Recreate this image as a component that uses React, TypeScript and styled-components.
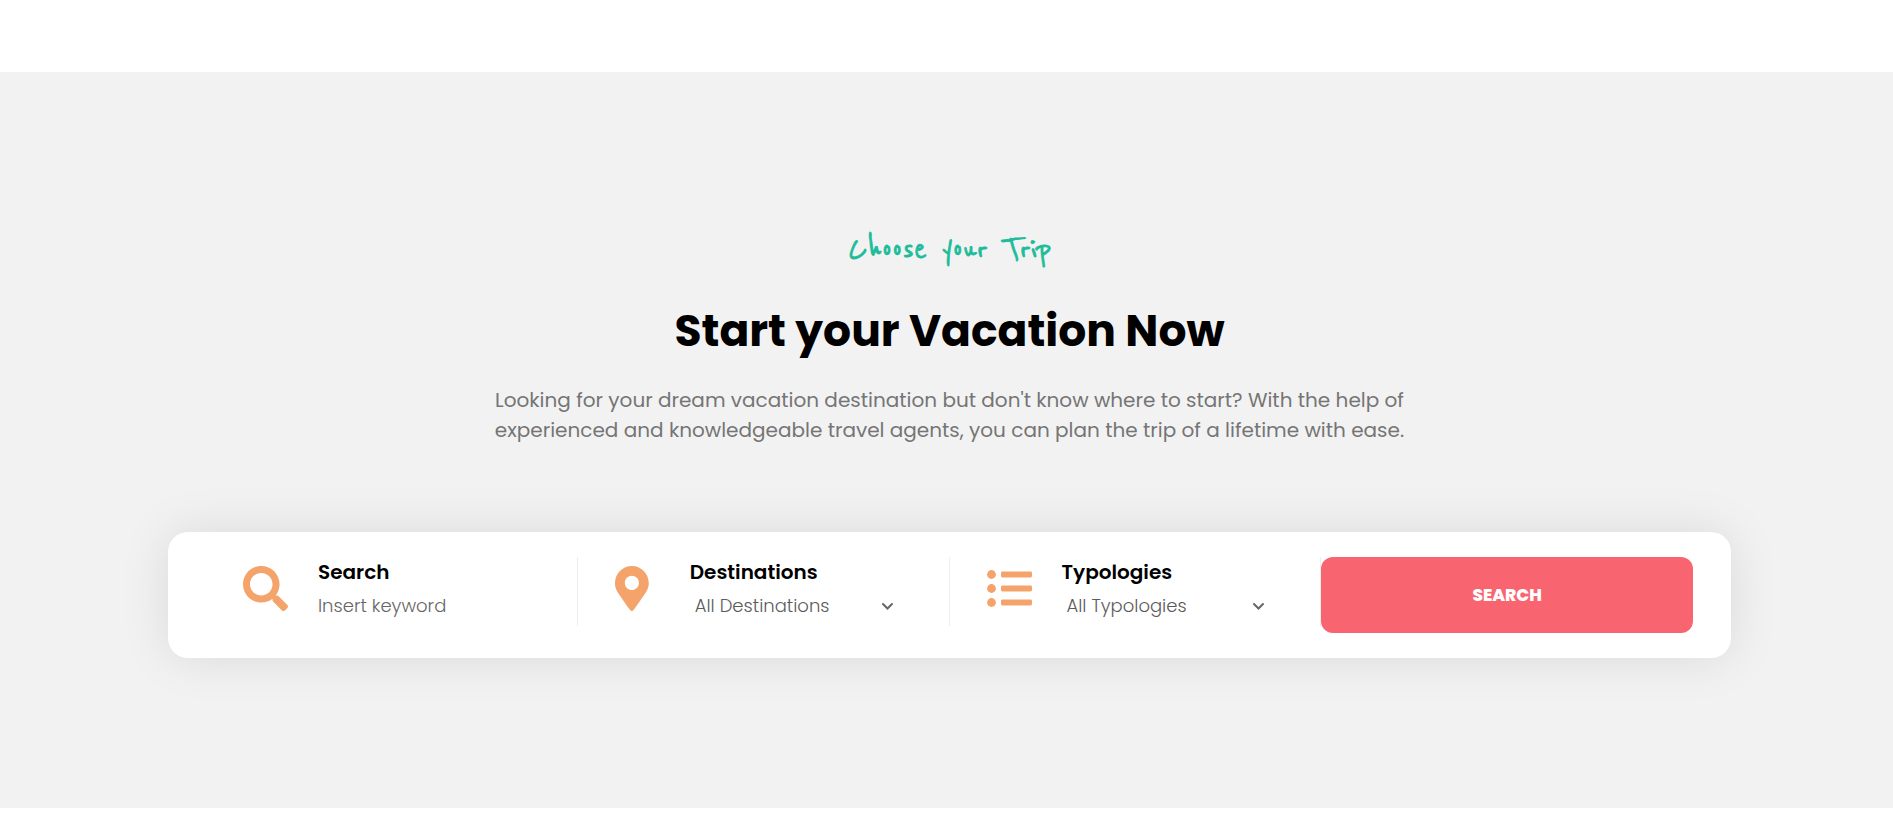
import React from "react";
import styled, { createGlobalStyle } from "styled-components";
import { FaSearch } from "react-icons/fa";

const GlobalStyle = createGlobalStyle`
  *, *::before, *::after {
    box-sizing: border-box;
  }
  body {
    margin: 0;
    background: #ffffff;
    color: #000000;
    font-family: "Poppins", "Inter", sans-serif;
    font-size: 16px;
  }
`;

const Page = styled.main`
  padding: 72px 0 24px;
`;

const Section = styled.section`
  padding: 152px 162px 150px 168px;
  background: #f2f2f2;
`;

const Intro = styled.header`
  display: flex;
  flex-direction: column;
  align-items: center;
  text-align: center;
`;

const Tagline = styled.p`
  margin: 0;
  color: #1fbc9b;
  font-family: "Reenie Beanie", "Covered By Your Grace", "Lato", cursive;
  font-size: 37px;
  font-weight: 700;
  line-height: 52px;
  -webkit-text-stroke: 1px currentColor;
`;

const Title = styled.h2`
  margin: 25px 0 0;
  font-size: 44px;
  font-weight: 700;
  line-height: 60px;
`;

const Lead = styled.p`
  max-width: 940px;
  margin: 24px 0 0;
  color: #757575;
  font-size: 20px;
  line-height: 30px;
`;

const SearchForm = styled.form`
  display: grid;
  grid-template-columns: repeat(4, 1fr);
  align-items: start;
  margin-top: 87px;
  padding: 25px 38px;
  border-radius: 20px;
  background: #ffffff;
  box-shadow: 0 0 50px rgba(0, 0, 0, 0.1);
`;

const Field = styled.div`
  display: flex;
  gap: 30px;
  height: 69px;
  padding: 0 52px 0 37px;
  border-right: 1px solid #eeeeee;
`;

const FieldIcon = styled.span`
  display: flex;
  flex: 0 0 45px;
  padding-top: 9px;
  color: #f4a46b;

  svg {
    flex: none;
    height: 45px;
    width: auto;
  }
`;

const FieldBody = styled.div`
  display: flex;
  flex: 1;
  flex-direction: column;
  min-width: 0;
`;

const FieldLabel = styled.label`
  font-size: 20px;
  font-weight: 600;
  line-height: 30px;
`;

const TextInput = styled.input`
  width: 100%;
  height: 36px;
  padding: 0;
  border: 0;
  outline: 0;
  background: transparent;
  color: #666666;
  font: inherit;
  font-size: 18px;
  font-weight: 300;

  &::placeholder {
    color: #666666;
    opacity: 1;
  }
`;

const SelectWrap = styled.div`
  position: relative;
  display: flex;
  align-items: center;
`;

const Select = styled.select`
  width: 100%;
  height: 36px;
  padding: 0 24px 0 5px;
  border: 0;
  outline: 0;
  appearance: none;
  background: transparent;
  color: #5c5c5c;
  font: inherit;
  font-size: 18px;
  font-weight: 300;
`;

const Chevron = styled.svg`
  position: absolute;
  right: 3px;
  width: 13px;
  height: 9px;
  pointer-events: none;
`;

const SubmitButton = styled.button`
  height: 76px;
  padding: 0;
  border: 0;
  border-radius: 12px;
  background: #f86570;
  color: #ffffff;
  font: inherit;
  font-size: 17px;
  font-weight: 800;
  cursor: pointer;
`;

const PinIcon = () => (
  <svg viewBox="0 0 384 512" fill="currentColor" aria-hidden="true">
    <path
      fillRule="evenodd"
      d="M172.268 501.67C26.97 291.031 0 269.413 0 192 0 85.961 85.961 0 192 0s192 85.961 192 192c0 77.413-26.97 99.031-172.268 309.67-9.535 13.774-29.93 13.773-39.464 0zM192 272c44.183 0 80-35.817 80-80s-35.817-80-80-80-80 35.817-80 80 35.817 80 80 80z"
    />
  </svg>
);

const ListIcon = () => (
  <svg viewBox="0 0 45 45" fill="currentColor" aria-hidden="true">
    {[8, 22, 36].map((y) => (
      <g key={y}>
        <circle cx="4.5" cy={y + 0.5} r="4.4" />
        <rect x="14" y={y - 2.5} width="31" height="6" rx="1.4" />
      </g>
    ))}
  </svg>
);

interface SelectFieldProps {
  id: string;
  label: string;
  option: string;
  icon: React.ReactNode;
}

const SelectField = ({ id, label, option, icon }: SelectFieldProps) => (
  <Field>
    <FieldIcon>{icon}</FieldIcon>
    <FieldBody>
      <FieldLabel htmlFor={id}>{label}</FieldLabel>
      <SelectWrap>
        <Select id={id}>
          <option>{option}</option>
        </Select>
        <Chevron viewBox="0 0 13 9" aria-hidden="true">
          <path d="M2 3l4.5 4.5L11 3" fill="none" stroke="#666666" strokeWidth="2" strokeLinecap="round" />
        </Chevron>
      </SelectWrap>
    </FieldBody>
  </Field>
);

export default function App() {
  return (
    <>
      <GlobalStyle />
      <Page>
        <Section>
          <Intro>
            <Tagline>Choose your Trip</Tagline>
            <Title>Start your Vacation Now</Title>
            <Lead>
              Looking for your dream vacation destination but don't know where to start? With the help of
              <br />
              experienced and knowledgeable travel agents, you can plan the trip of a lifetime with ease.
            </Lead>
          </Intro>
          <SearchForm onSubmit={(event) => event.preventDefault()}>
            <Field>
              <FieldIcon>
                <FaSearch />
              </FieldIcon>
              <FieldBody>
                <FieldLabel htmlFor="keyword">Search</FieldLabel>
                <TextInput id="keyword" type="text" placeholder="Insert keyword" />
              </FieldBody>
            </Field>
            <SelectField id="destinations" label="Destinations" option="All Destinations" icon={<PinIcon />} />
            <SelectField id="typologies" label="Typologies" option="All Typologies" icon={<ListIcon />} />
            <SubmitButton type="submit">SEARCH</SubmitButton>
          </SearchForm>
        </Section>
      </Page>
    </>
  );
}
